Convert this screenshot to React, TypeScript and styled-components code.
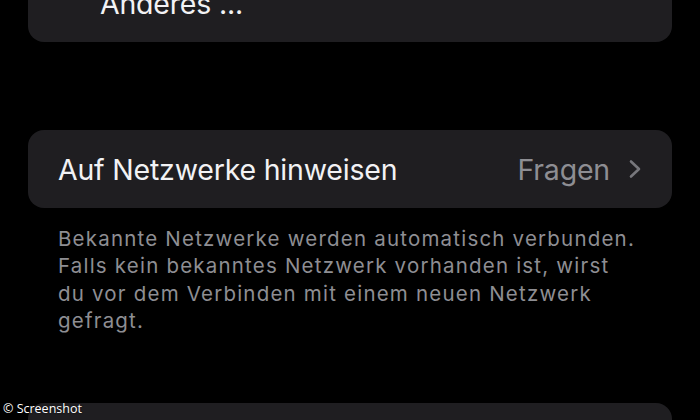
import React from "react";
import styled, { createGlobalStyle } from "styled-components";

const Global = createGlobalStyle`
  html, body { margin: 0; padding: 0; background: #000; }
  body { width: 700px; height: 420px; overflow: hidden; font-family: Inter, "Open Sans", "Liberation Sans", sans-serif; -webkit-font-smoothing: antialiased; }
`;

const Screen = styled.div`
  position: relative;
  width: 700px;
  height: 420px;
  overflow: hidden;
  background: #000;
`;

const Content = styled.div`
  display: flex;
  flex-direction: column;
  padding: 0 28px;
`;

const Card = styled.div<{ $gap?: number }>`
  background: #1f1e21;
  border-radius: 16px;
  margin-top: ${(p) => p.$gap ?? 0}px;
  overflow: hidden;
`;

const Row = styled.div<{ $indent?: number }>`
  height: 78px;
  display: flex;
  align-items: center;
  padding: 0 30px 0 ${(p) => p.$indent ?? 30}px;
  gap: 12px;
`;

const Label = styled.span`
  flex: 1;
  color: #f2f2f4;
  font-size: 28.5px;
  letter-spacing: -0.2px;
  white-space: nowrap;
`;

const Value = styled.span`
  color: #8e8e93;
  font-size: 28.5px;
  letter-spacing: -0.2px;
`;

const Chevron = styled.svg`
  width: 14px;
  height: 20px;
  margin-left: 6px;
  flex: none;
`;

const Footer = styled.p`
  margin: 17px 0 0;
  padding: 0 30px;
  color: #8e8e93;
  font-size: 20.5px;
  line-height: 27.4px;
  letter-spacing: 1.2px;
  white-space: nowrap;
`;

const Watermark = styled.div`
  position: absolute;
  left: 3px;
  bottom: 3px;
  color: #fff;
  font-family: "Open Sans", "Liberation Sans", sans-serif;
  font-size: 12.5px;
  text-shadow: 0 0 2px rgba(0,0,0,0.8);
`;

export default function App() {
  return (
    <Screen>
      <Global />
      <Content>
        <Card $gap={-36}>
          <Row $indent={72}>
            <Label>Anderes ...</Label>
          </Row>
        </Card>
        <Card $gap={88}>
          <Row>
            <Label>Auf Netzwerke hinweisen</Label>
            <Value>Fragen</Value>
            <Chevron viewBox="0 0 14 20" fill="none">
              <path d="M3 2.5 L11 10 L3 17.5" stroke="#77777c" strokeWidth="2.6" strokeLinecap="round" strokeLinejoin="round" />
            </Chevron>
          </Row>
        </Card>
        <Footer>
          Bekannte Netzwerke werden automatisch verbunden.<br />
          Falls kein bekanntes Netzwerk vorhanden ist, wirst<br />
          du vor dem Verbinden mit einem neuen Netzwerk<br />
          gefragt.
        </Footer>
        <Card $gap={68}>
          <Row>
            <Label>&nbsp;</Label>
          </Row>
        </Card>
      </Content>
      <Watermark>© Screenshot</Watermark>
    </Screen>
  );
}
